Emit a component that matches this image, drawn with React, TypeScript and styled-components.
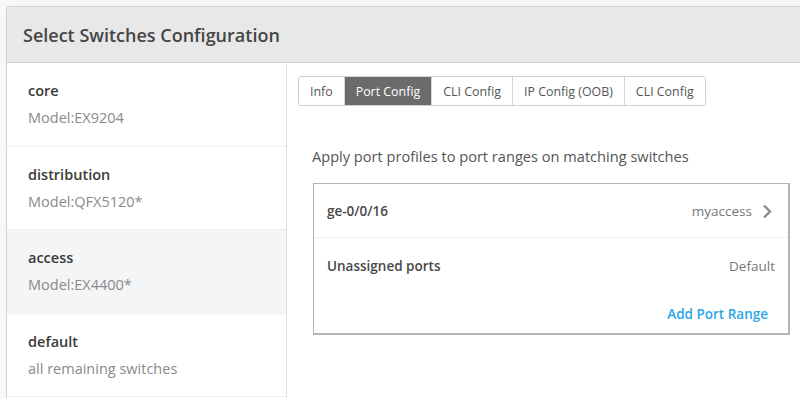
import React from 'react';
import styled, { createGlobalStyle } from 'styled-components';

const GlobalStyle = createGlobalStyle`
  html, body {
    margin: 0;
    padding: 0;
    background: #f7f7f7;
    font-family: 'Open Sans', 'Liberation Sans', sans-serif;
    overflow: hidden;
  }
`;

const Page = styled.div`
  padding: 6px 0 0 6px;
  height: 398px;
  box-sizing: border-box;
`;

const Panel = styled.div`
  height: 100%;
  display: flex;
  flex-direction: column;
  background: #fff;
  border: 1px solid #d2d2d2;
  border-right: none;
  border-bottom: none;
  border-radius: 4px 0 0 0;
  overflow: hidden;
`;

const Header = styled.div`
  height: 55px;
  display: flex;
  align-items: center;
  padding-left: 16px;
  background: #e8e8e8;
  border-bottom: 1px solid #cfcfcf;
  color: #454545;
  font-size: 18px;
  font-weight: 600;
`;

const Body = styled.div`
  flex: 1;
  display: flex;
`;

const Sidebar = styled.div`
  width: 280px;
  border-right: 1px solid #dedede;
  display: flex;
  flex-direction: column;
`;

const SwitchItem = styled.div<{ $active?: boolean }>`
  height: 83.5px;
  box-sizing: border-box;
  padding: 18px 0 0 21px;
  border-bottom: 1px solid #f0f0f0;
  background: ${({ $active }) => ($active ? '#f4f5f7' : '#fff')};
  display: flex;
  flex-direction: column;
  gap: 7px;
  flex-shrink: 0;
`;

const SwitchName = styled.div`
  font-size: 14.5px;
  line-height: 20px;
  font-weight: 600;
  color: #3a3a3a;
`;

const SwitchModel = styled.div`
  font-size: 14.5px;
  line-height: 20px;
  color: #8a8a8a;
`;

const Content = styled.div`
  flex: 1;
  padding: 13px 0 0 11px;
`;

const Tabs = styled.div`
  display: inline-flex;
  border: 1px solid #cfcfcf;
  border-radius: 3px;
  overflow: hidden;
`;

const Tab = styled.div<{ $active?: boolean }>`
  height: 28px;
  display: flex;
  align-items: center;
  padding: 0 11px;
  font-size: 12.4px;
  color: ${({ $active }) => ($active ? '#fff' : '#555')};
  background: ${({ $active }) => ($active ? '#6b6b6b' : '#fff')};
  border-left: 1px solid #d6d6d6;

  &:first-child {
    border-left: none;
  }
`;

const Description = styled.p`
  margin: 40px 0 0 14px;
  font-size: 14.6px;
  line-height: 20px;
  color: #555;
`;

const Card = styled.div`
  margin: 17px 10px 0 15px;
  width: 474px;
  border: 1px solid #b4b4b4;
  border-right-width: 2px;
  border-bottom-width: 2px;
`;

const Row = styled.div<{ $divider?: boolean }>`
  height: 54px;
  box-sizing: border-box;
  display: flex;
  align-items: center;
  justify-content: space-between;
  padding: 1px 13px 0 13px;
  border-bottom: ${({ $divider }) => ($divider ? '1px solid #efefef' : 'none')};
`;

const PortName = styled.span`
  font-size: 13.5px;
  font-weight: 600;
  color: #484848;
`;

const Profile = styled.span`
  display: flex;
  align-items: center;
  gap: 10px;
  font-size: 13.5px;
  color: #777;

  svg {
    margin-right: 3px;
  }
`;

const Footer = styled.div`
  display: flex;
  justify-content: flex-end;
  padding: 13px 20px 10px 0;
`;

const AddLink = styled.a`
  font-size: 13.5px;
  font-weight: 600;
  color: #2aa8e6;
  text-decoration: none;
  line-height: 18px;
`;

const Chevron = () => (
  <svg width="10" height="15" viewBox="0 0 10 15">
    <path d="M2 1.5 L8 7.5 L2 13.5" fill="none" stroke="#8a8a8a" strokeWidth="2.4" />
  </svg>
);

const switches = [
  { name: 'core', model: 'Model:EX9204' },
  { name: 'distribution', model: 'Model:QFX5120*' },
  { name: 'access', model: 'Model:EX4400*', active: true },
  { name: 'default', model: 'all remaining switches' },
];

const tabs = ['Info', 'Port Config', 'CLI Config', 'IP Config (OOB)', 'CLI Config'];

export default function App() {
  return (
    <Page>
      <GlobalStyle />
      <Panel>
        <Header>Select Switches Configuration</Header>
        <Body>
          <Sidebar>
            {switches.map((s) => (
              <SwitchItem key={s.name} $active={s.active}>
                <SwitchName>{s.name}</SwitchName>
                <SwitchModel>{s.model}</SwitchModel>
              </SwitchItem>
            ))}
          </Sidebar>
          <Content>
            <Tabs>
              {tabs.map((t, i) => (
                <Tab key={i} $active={i === 1}>{t}</Tab>
              ))}
            </Tabs>
            <Description>Apply port profiles to port ranges on matching switches</Description>
            <Card>
              <Row $divider>
                <PortName>ge-0/0/16</PortName>
                <Profile>
                  myaccess
                  <Chevron />
                </Profile>
              </Row>
              <Row>
                <PortName>Unassigned ports</PortName>
                <Profile>Default</Profile>
              </Row>
              <Footer>
                <AddLink href="#">Add Port Range</AddLink>
              </Footer>
            </Card>
          </Content>
        </Body>
      </Panel>
    </Page>
  );
}
